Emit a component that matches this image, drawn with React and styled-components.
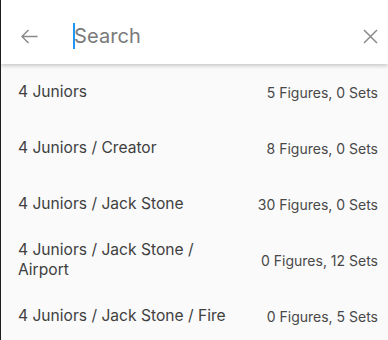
import styled, { createGlobalStyle } from 'styled-components';

const GlobalStyle = createGlobalStyle`
    html, body {
        margin: 0;
        padding: 0;
        background: #fafafa;
    }
    body {
        font-family: Inter, "Noto Sans", sans-serif;
    }
`

const rows = [
    { name: '4 Juniors', count: '5 Figures, 0 Sets' },
    { name: '4 Juniors / Creator', count: '8 Figures, 0 Sets' },
    { name: '4 Juniors / Jack Stone', count: '30 Figures, 0 Sets' },
    { name: '4 Juniors / Jack Stone / Airport', count: '0 Figures, 12 Sets' },
    { name: '4 Juniors / Jack Stone / Fire', count: '0 Figures, 5 Sets' },
];

export default function App() {
    return (
        <Page>
            <GlobalStyle />
            <SearchBar>
                <IconButton>
                    <svg width="17" height="15" viewBox="0 0 17 15">
                        <path d="M1 7.5H16.5M7.5 1L1 7.5L7.5 14" fill="none" stroke="#8a8a8a" strokeWidth="1.5" />
                    </svg>
                </IconButton>
                <Field>
                    <Caret />
                    <Placeholder>Search</Placeholder>
                </Field>
                <IconButton $last>
                    <svg width="15" height="15" viewBox="0 0 15 15">
                        <path d="M1 1L14 14M14 1L1 14" fill="none" stroke="#8a8a8a" strokeWidth="1.5" />
                    </svg>
                </IconButton>
            </SearchBar>
            <List>
                {rows.map((r) => (
                    <Row key={r.name}>
                        <Name>{r.name}</Name>
                        <Count>{r.count}</Count>
                    </Row>
                ))}
            </List>
        </Page>
    );
}

const Page = styled.div`
    width: 387px;
    height: 340px;
    overflow: hidden;
    border-left: 1px solid #1e1e1e;
    background: #fafafa;
    display: flex;
    flex-direction: column;
`

const SearchBar = styled.div`
    height: 64px;
    flex-shrink: 0;
    background: #fff;
    display: flex;
    align-items: center;
    padding: 8px 6px 0 16px;
    box-sizing: border-box;
    box-shadow: 0 2px 4px rgba(0, 0, 0, 0.2);
    position: relative;
    z-index: 1;
`

const IconButton = styled.div`
    width: 24px;
    height: 24px;
    display: flex;
    align-items: center;
    justify-content: center;
    flex-shrink: 0;
    margin-right: ${(p) => (p.$last ? '0' : '8px')};
`

const Field = styled.div`
    flex: 1;
    display: flex;
    align-items: center;
    padding-left: 24px;
`

const Caret = styled.div`
    width: 2px;
    height: 26px;
    background: #2196f3;
    margin-right: -1px;
`

const Placeholder = styled.span`
    font-size: 20px;
    color: #7a7a7a;
    letter-spacing: 0.1px;
`

const List = styled.div`
    display: flex;
    flex-direction: column;
`

const Row = styled.div`
    height: 56px;
    display: flex;
    align-items: center;
    justify-content: space-between;
    padding: 0 10px 0 17px;
    gap: 16px;
`

const Name = styled.div`
    font-size: 15.6px;
    line-height: 20px;
    color: #404040;
    max-width: 222px;
`

const Count = styled.div`
    font-size: 14px;
    color: #484848;
    white-space: nowrap;
`
